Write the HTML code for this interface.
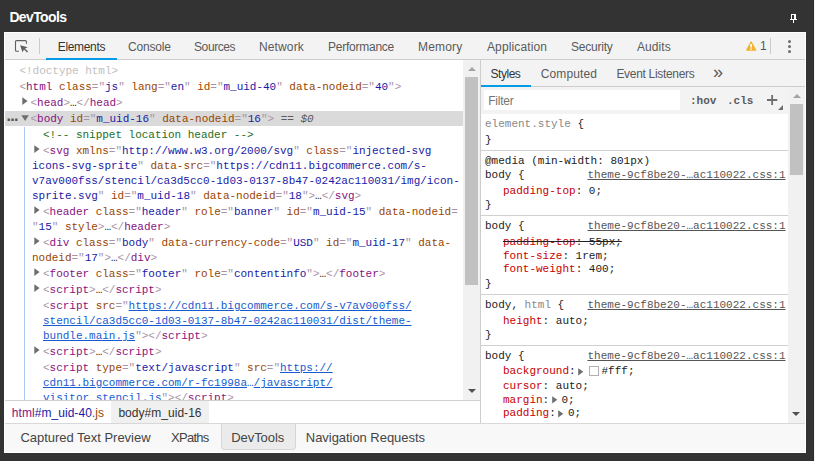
<!DOCTYPE html>
<html lang="en">
<head>
<meta charset="utf-8">
<title>DevTools</title>
<style>
html,body{margin:0;padding:0;}
body{width:815px;height:461px;overflow:hidden;background:#333;position:relative;font-family:"Liberation Sans",sans-serif;}
.abs{position:absolute;}
#edgeD{left:813px;top:0;width:1px;height:461px;background:#2b2b2b;}
#edgeW{left:814px;top:0;width:1px;height:461px;background:#f4f4f4;}
#title{left:9px;top:8px;font-weight:bold;font-size:14px;line-height:18px;color:#fff;white-space:nowrap;letter-spacing:-0.35px;}
#panel{left:4px;top:32px;width:802px;height:421px;background:#fff;}
/* main toolbar */
#tb{left:5px;top:33px;width:800px;height:26px;background:#f3f3f3;border-bottom:1px solid #cdcdcd;}
.tab{position:absolute;top:34px;height:26px;line-height:26px;font-size:11.5px;color:#5a5a5a;white-space:nowrap;}
.tab.sel{color:#333;}
.ul{position:absolute;height:2px;background:#039be5;}
.vsep{position:absolute;width:1px;background:#ccc;}
/* elements tree */
#tree{left:5px;top:60px;width:458px;height:340px;overflow:hidden;background:#fff;}
.mono{font-family:"Liberation Mono",monospace;font-size:11px;white-space:pre;}
.ln{position:absolute;height:15px;line-height:15px;font-family:"Liberation Mono",monospace;font-size:11px;white-space:pre;color:#a894a6;letter-spacing:-0.02px;}
.t{color:#881280}.an{color:#994500}.av{color:#1a1aa6}.cm{color:#236e25}.dt{color:#c0c0c0}
.lk{color:#165bd0;text-decoration:underline;}
.arr{position:absolute;width:0;height:0;}
/* scrollbars */
.sb{position:absolute;background:#f1f1f1;}
.thumb{position:absolute;background:#c1c1c1;}
/* styles */
.sl{position:absolute;height:14px;line-height:14px;font-family:"Liberation Mono",monospace;font-size:11px;white-space:pre;color:#222;}
.pn{color:#c80000}
.src{color:#555;text-decoration:underline;}
.hr{position:absolute;left:481px;width:307px;height:1px;background:#d0d0d0;}
.g{color:#888}
.lb{line-height:18px;height:18px;white-space:nowrap;}
</style>
</head>
<body>
<svg class="abs" style="left:789px;top:13px" width="10" height="11" viewBox="0 0 10 11" shape-rendering="crispEdges"><rect x="2" y="1" width="5" height="5" fill="#fff"/><rect x="3" y="2" width="2" height="4" fill="#333"/><rect x="1" y="6" width="7" height="1" fill="#fff"/><rect x="4" y="7" width="1" height="3" fill="#fff"/></svg>
<div class="abs" id="edgeD"></div><div class="abs" id="edgeW"></div>
<div class="abs" id="panel"></div>
<div class="abs" id="tb"></div>

<!-- inspect icon -->
<svg class="abs" style="left:14px;top:39px" width="16" height="16" viewBox="0 0 16 16"><path d="M12.4 4.8V2.6a1 1 0 0 0-1-1H2.5a1 1 0 0 0-1 1v8.7a1 1 0 0 0 1 1H4.9" fill="none" stroke="#606060" stroke-width="1.1"/><path d="M6.1 6.2l7.6 2-2.7 1.3 3.1 3.1-1 1-3.1-3.1-1.5 2.8z" fill="#606060"/></svg>
<div class="vsep" style="left:39px;top:38px;height:16px"></div>

<div class="ul" style="left:46px;top:58px;width:71px"></div>

<!-- warning -->
<svg class="abs" style="left:746px;top:41px" width="11" height="10" viewBox="0 0 11 10"><path d="M5.15 1L9.6 9.1H0.7z" fill="#f4b22c" stroke="#f4b22c" stroke-width="1.3" stroke-linejoin="round"/><rect x="4.3" y="3" width="1.7" height="3.6" fill="#fff"/><rect x="4.3" y="7.4" width="1.7" height="1.3" fill="#fff"/></svg>
<div class="vsep" style="left:770px;top:38px;height:16px"></div>
<svg class="abs" style="left:787px;top:39px" width="5" height="15" viewBox="0 0 5 15"><circle cx="2.5" cy="2.5" r="1.5" fill="#6e6e6e"/><circle cx="2.5" cy="7.5" r="1.5" fill="#6e6e6e"/><circle cx="2.5" cy="12.5" r="1.5" fill="#6e6e6e"/></svg>

<!-- ELEMENTS TREE -->
<div class="abs" id="tree">
<div class="abs" style="left:0;top:51px;width:458px;height:15px;background:#dadada"></div>
<div class="abs" style="left:19px;top:67px;width:1px;height:280px;background:#a9c7f0"></div>
<div class="ln" style="left:14.4px;top:4px"><span class="dt">&lt;!doctype html&gt;</span></div>
<div class="ln" style="left:14.4px;top:20px">&lt;<span class="t">html</span> <span class="an">class</span>="<span class="av">js</span>" <span class="an">lang</span>="<span class="av">en</span>" <span class="an">id</span>="<span class="av">m_uid-40</span>" <span class="an">data-nodeid</span>="<span class="av">40</span>"&gt;</div>
<svg class="abs" style="left:17.2px;top:37.0px" width="7" height="9" viewBox="0 0 7 9"><path d="M0.3 0.2v7.8L5.6 4.1z" fill="#6e6e6e"/></svg>
<div class="ln" style="left:25.5px;top:36px">&lt;<span class="t">head</span>&gt;<span style="color:#222">…</span>&lt;/<span class="t">head</span>&gt;</div>
<div class="abs" style="left:1.6px;top:47.8px;height:15px;line-height:15px;color:#555;font-family:'Liberation Sans',sans-serif;font-size:16px;letter-spacing:-0.7px;font-weight:bold">...</div>
<svg class="abs" style="left:15.6px;top:54.8px" width="9" height="7" viewBox="0 0 9 7"><path d="M0.4 0.3h7.4L4.1 6z" fill="#6e6e6e"/></svg>
<div class="ln" style="left:25.5px;top:52px">&lt;<span class="t">body</span> <span class="an">id</span>="<span class="av">m_uid-16</span>" <span class="an">data-nodeid</span>="<span class="av">16</span>"&gt;<span style="color:#5a5a5a"> == <i>$0</i></span></div>
<div class="ln" style="left:38.0px;top:68px"><span class="cm">&lt;!-- snippet location header --&gt;</span></div>
<svg class="abs" style="left:29.2px;top:85.0px" width="7" height="9" viewBox="0 0 7 9"><path d="M0.3 0.2v7.8L5.6 4.1z" fill="#6e6e6e"/></svg>
<div class="ln" style="left:38.0px;top:84px">&lt;<span class="t">svg</span> <span class="an">xmlns</span>="<span class="av">http://www.w3.org/2000/svg</span>" <span class="an">class</span>="<span class="av">injected-svg</span></div>
<div class="ln" style="left:27.0px;top:99px"><span class="av">icons-svg-sprite</span>" <span class="an">data-src</span>="<span class="av">https://cdn11.bigcommerce.com/s-</span></div>
<div class="ln" style="left:27.0px;top:114px"><span class="av">v7av000fss/stencil/ca3d5cc0-1d03-0137-8b47-0242ac110031/img/icon-</span></div>
<div class="ln" style="left:27.0px;top:129px"><span class="av">sprite.svg</span>" <span class="an">id</span>="<span class="av">m_uid-18</span>" <span class="an">data-nodeid</span>="<span class="av">18</span>"&gt;<span style="color:#222">…</span>&lt;/<span class="t">svg</span>&gt;</div>
<svg class="abs" style="left:29.2px;top:146.0px" width="7" height="9" viewBox="0 0 7 9"><path d="M0.3 0.2v7.8L5.6 4.1z" fill="#6e6e6e"/></svg>
<div class="ln" style="left:38.0px;top:145px">&lt;<span class="t">header</span> <span class="an">class</span>="<span class="av">header</span>" <span class="an">role</span>="<span class="av">banner</span>" <span class="an">id</span>="<span class="av">m_uid-15</span>" <span class="an">data-nodeid</span>=</div>
<div class="ln" style="left:27.0px;top:160px">"<span class="av">15</span>" <span class="an">style</span>&gt;<span style="color:#222">…</span>&lt;/<span class="t">header</span>&gt;</div>
<svg class="abs" style="left:29.2px;top:177.0px" width="7" height="9" viewBox="0 0 7 9"><path d="M0.3 0.2v7.8L5.6 4.1z" fill="#6e6e6e"/></svg>
<div class="ln" style="left:38.0px;top:176px">&lt;<span class="t">div</span> <span class="an">class</span>="<span class="av">body</span>" <span class="an">data-currency-code</span>="<span class="av">USD</span>" <span class="an">id</span>="<span class="av">m_uid-17</span>" <span class="an">data-</span></div>
<div class="ln" style="left:27.0px;top:191px"><span class="an">nodeid</span>="<span class="av">17</span>"&gt;<span style="color:#222">…</span>&lt;/<span class="t">div</span>&gt;</div>
<svg class="abs" style="left:29.2px;top:208.0px" width="7" height="9" viewBox="0 0 7 9"><path d="M0.3 0.2v7.8L5.6 4.1z" fill="#6e6e6e"/></svg>
<div class="ln" style="left:38.0px;top:207px">&lt;<span class="t">footer</span> <span class="an">class</span>="<span class="av">footer</span>" <span class="an">role</span>="<span class="av">contentinfo</span>"&gt;<span style="color:#222">…</span>&lt;/<span class="t">footer</span>&gt;</div>
<svg class="abs" style="left:29.2px;top:224.0px" width="7" height="9" viewBox="0 0 7 9"><path d="M0.3 0.2v7.8L5.6 4.1z" fill="#6e6e6e"/></svg>
<div class="ln" style="left:38.0px;top:223px">&lt;<span class="t">script</span>&gt;<span style="color:#222">…</span>&lt;/<span class="t">script</span>&gt;</div>
<div class="ln" style="left:38.0px;top:239px">&lt;<span class="t">script</span> <span class="an">src</span>="<span class="lk">https://cdn11.bigcommerce.com/s-v7av000fss/</span></div>
<div class="ln" style="left:38.0px;top:254px"><span class="lk">stencil/ca3d5cc0-1d03-0137-8b47-0242ac110031/dist/theme-</span></div>
<div class="ln" style="left:38.0px;top:269px"><span class="lk">bundle.main.js</span>"&gt;&lt;/<span class="t">script</span>&gt;</div>
<svg class="abs" style="left:29.2px;top:286.0px" width="7" height="9" viewBox="0 0 7 9"><path d="M0.3 0.2v7.8L5.6 4.1z" fill="#6e6e6e"/></svg>
<div class="ln" style="left:38.0px;top:285px">&lt;<span class="t">script</span>&gt;<span style="color:#222">…</span>&lt;/<span class="t">script</span>&gt;</div>
<div class="ln" style="left:38.0px;top:301px">&lt;<span class="t">script</span> <span class="an">type</span>="<span class="av">text/javascript</span>" <span class="an">src</span>="<span class="lk">https://</span></div>
<div class="ln" style="left:38.0px;top:316px"><span class="lk">cdn11.bigcommerce.com/r-fc1998a</span><span style="color:#165bd0">…</span><span class="lk">/javascript/</span></div>
<div class="ln" style="left:38.0px;top:331px"><span class="lk">visitor_stencil.js</span>"&gt;&lt;/<span class="t">script</span>&gt;</div>
</div>

<!-- left scrollbar -->
<div class="sb" style="left:463px;top:60px;width:17px;height:340px"></div>
<div class="thumb" style="left:465px;top:77px;width:13px;height:208px"></div>
<div class="arr" style="left:467.5px;top:67px;border-bottom:4px solid #a3a3a3;border-left:4px solid transparent;border-right:4px solid transparent"></div>
<div class="arr" style="left:467.6px;top:389px;border-top:4px solid #505050;border-left:4px solid transparent;border-right:4px solid transparent"></div>
<div class="vsep" style="left:480px;top:60px;height:363px;background:#cdcdcd"></div>

<!-- breadcrumbs -->
<div class="abs" style="left:5px;top:400px;width:475px;height:1px;background:#d0d0d0"></div>
<div class="abs" style="left:111px;top:401px;width:98px;height:22px;background:#f0f0f0"></div>

<!-- bottom tab bar -->
<div class="abs" style="left:5px;top:423px;width:800px;height:29px;background:#f8f8f8;border-top:1px solid #d8d8d8;box-sizing:border-box"></div>
<div class="abs" style="left:221px;top:424px;width:75px;height:26.4px;box-sizing:border-box;background:#ebebeb;border:1px solid #d6d6d6;border-top:none;border-radius:0 0 4px 4px"></div>

<!-- STYLES PANE -->
<div class="abs" style="left:481px;top:60px;width:324px;height:26px;background:#f3f3f3;border-bottom:1px solid #cdcdcd"></div>
<div class="ul" style="left:481px;top:85px;width:50px"></div>
<div class="abs" style="left:481px;top:87px;width:307px;height:27px;background:#f3f3f3"></div>
<div class="abs" style="left:484px;top:90px;width:196px;height:20px;background:#fff"></div>
<div class="sl" style="left:690px;top:94px;color:#5a5a5a;font-weight:bold">:hov</div>
<div class="sl" style="left:727px;top:94px;color:#5a5a5a;font-weight:bold">.cls</div>
<svg class="abs" style="left:766px;top:93px" width="20" height="19" viewBox="0 0 20 19"><path d="M1 7h10.3M6.15 2v10" stroke="#6e6e6e" stroke-width="1.8"/><path d="M17 12v5h-5z" fill="#6e6e6e"/></svg>

<div class="sl" style="left:485.0px;top:117px"><span class="g">element.style</span> {</div>
<div class="sl" style="left:485.0px;top:133px">}</div>
<div class="hr" style="top:150px"></div>
<div class="sl" style="left:485.0px;top:154px">@media (min-width: 801px)</div>
<div class="sl" style="left:485.0px;top:168px">body {</div>
<div class="sl" style="left:587.5px;top:168px"><span class="src">theme-9cf8be20-…ac110022.css:1</span></div>
<div class="sl" style="left:503.0px;top:184px"><span class="pn">padding-top</span>: 0;</div>
<div class="sl" style="left:485.0px;top:198px">}</div>
<div class="hr" style="top:215px"></div>
<div class="sl" style="left:485.0px;top:219px">body {</div>
<div class="sl" style="left:587.5px;top:219px"><span class="src">theme-9cf8be20-…ac110022.css:1</span></div>
<div class="sl" style="left:503.0px;top:235px"><span style="text-decoration:line-through;text-decoration-color:#222"><span class="pn">padding-top</span>: 55px;</span></div>
<div class="sl" style="left:503.0px;top:249px"><span class="pn">font-size</span>: 1rem;</div>
<div class="sl" style="left:503.0px;top:262px"><span class="pn">font-weight</span>: 400;</div>
<div class="sl" style="left:485.0px;top:277px">}</div>
<div class="hr" style="top:294px"></div>
<div class="sl" style="left:485.0px;top:298px">body, <span class="g">html</span> {</div>
<div class="sl" style="left:587.5px;top:298px"><span class="src">theme-9cf8be20-…ac110022.css:1</span></div>
<div class="sl" style="left:503.0px;top:314px"><span class="pn">height</span>: auto;</div>
<div class="sl" style="left:485.0px;top:328px">}</div>
<div class="hr" style="top:345px"></div>
<div class="sl" style="left:485.0px;top:349px">body {</div>
<div class="sl" style="left:587.5px;top:349px"><span class="src">theme-9cf8be20-…ac110022.css:1</span></div>
<div class="sl" style="left:503.0px;top:364px"><span class="pn">background</span>:</div>
<svg class="abs" style="left:578.3px;top:367.5px" width="7" height="9" viewBox="0 0 7 9"><path d="M0.2 0.2v7.2L5.3 3.8z" fill="#6e6e6e"/></svg>
<div class="abs" style="left:589px;top:366.2px;width:9.6px;height:9.4px;box-sizing:border-box;border:1px solid #b0b0b0;background:#fff"></div>
<div class="sl" style="left:601.5px;top:364px">#fff;</div>
<div class="sl" style="left:503.0px;top:379px"><span class="pn">cursor</span>: auto;</div>
<div class="sl" style="left:503.0px;top:393px"><span class="pn">margin</span>:</div>
<svg class="abs" style="left:552.0px;top:396.1px" width="7" height="9" viewBox="0 0 7 9"><path d="M0.2 0.2v7.2L5.3 3.8z" fill="#6e6e6e"/></svg>
<div class="sl" style="left:561.5px;top:393px">0;</div>
<div class="sl" style="left:503.0px;top:406px"><span class="pn">padding</span>:</div>
<svg class="abs" style="left:558.3px;top:409.5px" width="7" height="9" viewBox="0 0 7 9"><path d="M0.2 0.2v7.2L5.3 3.8z" fill="#6e6e6e"/></svg>
<div class="sl" style="left:568.0px;top:406px">0;</div>

<!-- right scrollbar -->
<div class="sb" style="left:788px;top:87px;width:17px;height:336px"></div>
<div class="thumb" style="left:790px;top:104px;width:13px;height:71px"></div>
<div class="arr" style="left:792.5px;top:94px;border-bottom:4px solid #a3a3a3;border-left:4px solid transparent;border-right:4px solid transparent"></div>
<div class="arr" style="left:792px;top:412px;border-top:4px solid #505050;border-left:4px solid transparent;border-right:4px solid transparent"></div>
<div class="abs lb" style="left:9.40px;top:8.00px;font-size:14px;letter-spacing:-0.629px;font-weight:bold;color:#fff">DevTools</div>
<div class="abs lb" style="left:57.80px;top:38.00px;font-size:12px;letter-spacing:-0.343px;color:#333">Elements</div>
<div class="abs lb" style="left:128.00px;top:38.00px;font-size:12px;letter-spacing:-0.200px;color:#5a5a5a">Console</div>
<div class="abs lb" style="left:194.00px;top:38.00px;font-size:12px;letter-spacing:-0.400px;color:#5a5a5a">Sources</div>
<div class="abs lb" style="left:259.00px;top:38.00px;font-size:12px;letter-spacing:0.133px;color:#5a5a5a">Network</div>
<div class="abs lb" style="left:328.00px;top:38.00px;font-size:12px;letter-spacing:-0.240px;color:#5a5a5a">Performance</div>
<div class="abs lb" style="left:418.00px;top:38.00px;font-size:12px;letter-spacing:0.160px;color:#5a5a5a">Memory</div>
<div class="abs lb" style="left:487.00px;top:38.00px;font-size:12px;letter-spacing:0.120px;color:#5a5a5a">Application</div>
<div class="abs lb" style="left:571.00px;top:38.00px;font-size:12px;letter-spacing:-0.229px;color:#5a5a5a">Security</div>
<div class="abs lb" style="left:637.00px;top:38.00px;font-size:12px;letter-spacing:0.080px;color:#5a5a5a">Audits</div>
<div class="abs lb" style="left:490.60px;top:65.00px;font-size:12px;letter-spacing:-0.480px;color:#333">Styles</div>
<div class="abs lb" style="left:540.80px;top:65.00px;font-size:12px;letter-spacing:0.114px;color:#5a5a5a">Computed</div>
<div class="abs lb" style="left:616.40px;top:65.00px;font-size:12px;letter-spacing:-0.314px;color:#5a5a5a">Event Listeners</div>
<div class="abs lb" style="left:488.20px;top:92.00px;font-size:12px;letter-spacing:-0.240px;color:#757575">Filter</div>
<div class="abs lb" style="left:11.80px;top:404.00px;font-size:12px;letter-spacing:0.053px;"><span style="color:#881280">html</span><span style="color:#1a1aa6">#m_uid-40</span><span style="color:#994500">.js</span></div>
<div class="abs lb" style="left:118.40px;top:404.00px;font-size:12px;letter-spacing:0.033px;color:#333">body#m_uid-16</div>
<div class="abs lb" style="left:20.40px;top:429.00px;font-size:13px;letter-spacing:-0.020px;color:#444">Captured Text Preview</div>
<div class="abs lb" style="left:171.00px;top:429.00px;font-size:13px;letter-spacing:-0.720px;color:#444">XPaths</div>
<div class="abs lb" style="left:231.20px;top:429.00px;font-size:13px;letter-spacing:-0.057px;color:#444">DevTools</div>
<div class="abs lb" style="left:305.80px;top:429.00px;font-size:13px;letter-spacing:-0.044px;color:#444">Navigation Requests</div>
<div class="abs lb" style="left:760px;top:37px;font-size:12px;color:#555">1</div>
<div class="abs lb" style="left:713px;top:62.5px;font-size:18px;color:#5a5a5a">»</div>
</body>
</html>
